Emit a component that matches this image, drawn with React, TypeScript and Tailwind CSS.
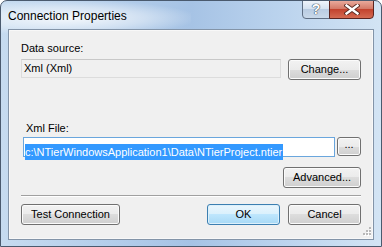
import React from "react";

const font = { fontFamily: '"Liberation Sans", Arial, sans-serif' };

function Btn({ children, className = "", def = false }: { children: React.ReactNode; className?: string; def?: boolean }) {
  return (
    <div
      className={
        "flex items-center justify-center rounded-[3px] border text-[11px] text-black " +
        (def
          ? "border-[#3c7fb1] bg-[linear-gradient(#eaf6fd_0%,#d9f0fc_50%,#bee6fd_50%,#a7d9f5_100%)] shadow-[inset_0_0_0_1px_#dcf0fb] "
          : "border-[#707070] bg-[linear-gradient(#f2f2f2_0%,#ebebeb_50%,#dddddd_50%,#cfcfcf_100%)] shadow-[inset_0_0_0_1px_#fbfbfb] ") +
        className
      }
    >
      {children}
    </div>
  );
}

export default function App() {
  return (
    <div
      className="relative w-[382px] h-[247px] overflow-hidden rounded-t-[7px] border border-[#4a5a6e] bg-[linear-gradient(90deg,#c6dbf0_0%,#b3cdea_30%,#a6c3e5_50%,#bcd4ee_75%,#d3e4f4_100%)] flex flex-col"
      style={font}
    >
      <div className="pointer-events-none absolute left-0 top-0 w-[190px] h-[34px] bg-[radial-gradient(ellipse_at_35%_50%,rgba(255,255,255,0.85)_0%,rgba(255,255,255,0.4)_45%,rgba(255,255,255,0)_75%)]" />
      {/* title bar */}
      <div className="relative h-[28px] flex items-start">
        <div className="pl-[7px] pt-[8px] text-[12px] leading-[14px] text-black">Connection Properties</div>
        <div className="ml-auto mr-[7px] flex">
          <div className="w-[28px] h-[19px] -mt-px rounded-bl-[4px] border border-[#5f6f84] bg-[linear-gradient(#eef4fb_0%,#d5e2f0_45%,#b9cce2_50%,#c9d9ea_100%)] flex items-center justify-center text-[14px] font-bold text-white [text-shadow:0_0_1px_#3b4a5c,0_0_1px_#3b4a5c,0_0_1px_#3b4a5c]">
            ?
          </div>
          <div className="w-[45px] h-[19px] -mt-px -ml-px rounded-br-[4px] border border-[#5b2420] bg-[linear-gradient(#e9a99b_0%,#d47a68_45%,#c3432e_50%,#d46a52_100%)] flex items-center justify-center">
            <svg width="16" height="11" viewBox="0 0 16 11">
              <path d="M2.5 1.5 L13.5 9.5 M13.5 1.5 L2.5 9.5" stroke="#5a2a22" strokeWidth="4.2" strokeLinecap="square" />
              <path d="M2.5 1.5 L13.5 9.5 M13.5 1.5 L2.5 9.5" stroke="#ffffff" strokeWidth="2.4" strokeLinecap="square" />
            </svg>
          </div>
        </div>
      </div>
      {/* client */}
      <div className="relative mx-[7px] h-[211px] border border-[#8394a8] bg-[#f0f0f0] shadow-[inset_0_0_0_1px_#ffffff80] flex flex-col px-[12px]">
        <div className="mt-[12px] h-[13px] leading-[13px] text-[11px] text-black">Data source:</div>
        <div className="mt-[4px] flex items-start">
          <div className="w-[260px] h-[19px] border border-[#dcdcdc] border-t-[#c8c8c8] bg-[#f0f0f0] pl-[2px] text-[11px] leading-[17px] text-black">
            Xml (Xml)
          </div>
          <Btn className="ml-[7px] w-[73px] h-[21px]">Change...</Btn>
        </div>
        <div className="mt-[42px] ml-[5px] h-[13px] leading-[13px] text-[11px] text-black">Xml File:</div>
        <div className="mt-[2px] ml-[2px] flex items-start">
          <div className="w-[312px] h-[20px] border border-[#6aa6dd] bg-white px-px pt-px">
            <span className="inline-block bg-[#3399ff] text-white text-[11px] leading-[16px] pr-px">
              c:\NTierWindowsApplication1\Data\NTierProject.ntier
            </span>
          </div>
          <Btn className="ml-[2px] w-[24px] h-[19px]">
            <span className="-mt-[4px] text-[11px] leading-[11px]">...</span>
          </Btn>
        </div>
        <div className="mt-[10px] flex justify-end">
          <Btn className="w-[78px] h-[21px]">Advanced...</Btn>
        </div>
        <div className="mt-[7px] h-px bg-[#a0a0a0] shadow-[0_1px_0_#ffffff]" />
        <div className="mt-[8px] flex items-start">
          <Btn className="w-[99px] h-[21px]">Test Connection</Btn>
          <Btn def className="ml-auto w-[73px] h-[21px]">OK</Btn>
          <Btn className="ml-[8px] w-[73px] h-[21px]">Cancel</Btn>
        </div>
        <svg className="absolute right-[2px] bottom-[2px]" width="10" height="10" viewBox="0 0 10 10">
          {[
            [8, 0], [8, 3], [5, 3], [8, 6], [5, 6], [2, 6],
          ].map(([x, y], i) => (
            <g key={i}>
              <rect x={x + 1} y={y + 1} width="2" height="2" fill="#ffffff" />
              <rect x={x} y={y} width="2" height="2" fill="#b8b8b8" />
            </g>
          ))}
        </svg>
      </div>
    </div>
  );
}
